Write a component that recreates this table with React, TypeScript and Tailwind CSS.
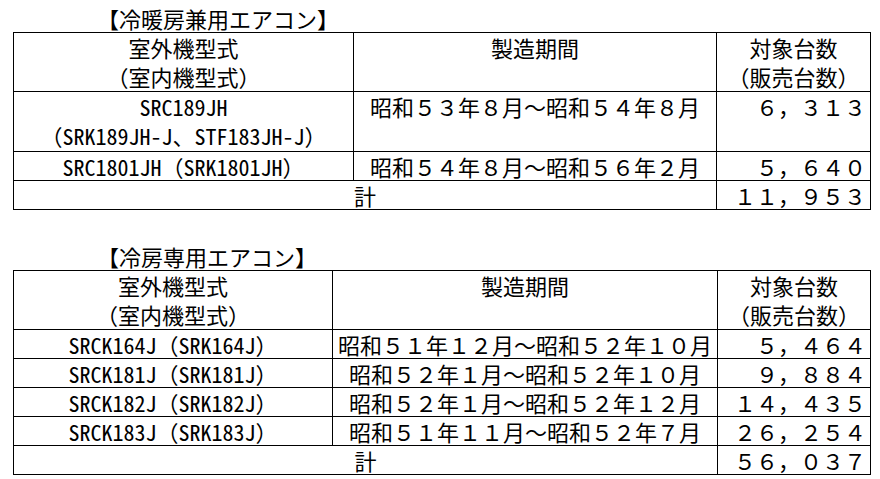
const font = {
  fontFamily: '"Noto Sans Mono CJK JP", "Noto Sans CJK JP", sans-serif',
};

type Row = { model: string[]; period: string; count: string; h: string };

const heatRows: Row[] = [
  {
    model: ['SRC189JH', '（SRK189JH-J、STF183JH-J）'],
    period: '昭和５３年８月～昭和５４年８月',
    count: '６，３１３',
    h: 'h-[60px]',
  },
  {
    model: ['SRC1801JH（SRK1801JH）'],
    period: '昭和５４年８月～昭和５６年２月',
    count: '５，６４０',
    h: 'h-[28px]',
  },
];

const coolRows: Row[] = [
  { model: ['SRCK164J（SRK164J）'], period: '昭和５１年１２月～昭和５２年１０月', count: '５，４６４', h: 'h-[29px]' },
  { model: ['SRCK181J（SRK181J）'], period: '昭和５２年１月～昭和５２年１０月', count: '９，８８４', h: 'h-[29px]' },
  { model: ['SRCK182J（SRK182J）'], period: '昭和５２年１月～昭和５２年１２月', count: '１４，４３５', h: 'h-[29px]' },
  { model: ['SRCK183J（SRK183J）'], period: '昭和５１年１１月～昭和５２年７月', count: '２６，２５４', h: 'h-[29px]' },
];

function RecallTable({ cols, rows, total }: { cols: [string, string, string]; rows: Row[]; total: string }) {
  const cell = 'border border-black align-top p-0 whitespace-nowrap';
  return (
    <table className="table-fixed border-collapse w-[857px] leading-[27px]">
      <colgroup>
        <col className={cols[0]} />
        <col className={cols[1]} />
        <col className={cols[2]} />
      </colgroup>
      <tbody>
        <tr className="h-[59px]">
          <td className={`${cell} text-center`}>
            <div className="h-[29px] leading-[29px]">室外機型式</div>
            <div className="h-[29px] leading-[29px]">（室内機型式）</div>
          </td>
          <td className={`${cell} text-center leading-[29px]`}>製造期間</td>
          <td className={`${cell} text-center`}>
            <div className="h-[29px] leading-[29px]">対象台数</div>
            <div className="h-[29px] leading-[29px]">（販売台数）</div>
          </td>
        </tr>
        {rows.map((r) => (
          <tr key={r.period} className={r.h}>
            <td className={`${cell} text-center`}>
              {r.model.map((m, i) => (
                <div key={m} className={i === 0 ? 'h-[28px] leading-[28px]' : 'h-[30px] leading-[30px]'}>
                  {m}
                </div>
              ))}
            </td>
            <td className={`${cell} text-center leading-[28px]`}>{r.period}</td>
            <td className={`${cell} text-right pr-[4px] leading-[28px]`}>{r.count}</td>
          </tr>
        ))}
        <tr className="h-[29px]">
          <td colSpan={2} className={`${cell} text-center leading-[28px]`}>計</td>
          <td className={`${cell} text-right pr-[4px] leading-[28px]`}>{total}</td>
        </tr>
      </tbody>
    </table>
  );
}

export default function App() {
  return (
    <div className="w-[880px] h-[479px] bg-white text-black text-[22px] pl-[13px] pt-[4px]" style={font}>
      <div className="h-[28px] leading-[28px] pl-[84px]">【冷暖房兼用エアコン】</div>
      <RecallTable cols={['w-[340px]', 'w-[363px]', 'w-[154px]']} rows={heatRows} total="１１，９５３" />

      <div className="h-[28px] leading-[28px] pl-[84px] mt-[32px]">【冷房専用エアコン】</div>
      <RecallTable cols={['w-[319px]', 'w-[385px]', 'w-[153px]']} rows={coolRows} total="５６，０３７" />
    </div>
  );
}
